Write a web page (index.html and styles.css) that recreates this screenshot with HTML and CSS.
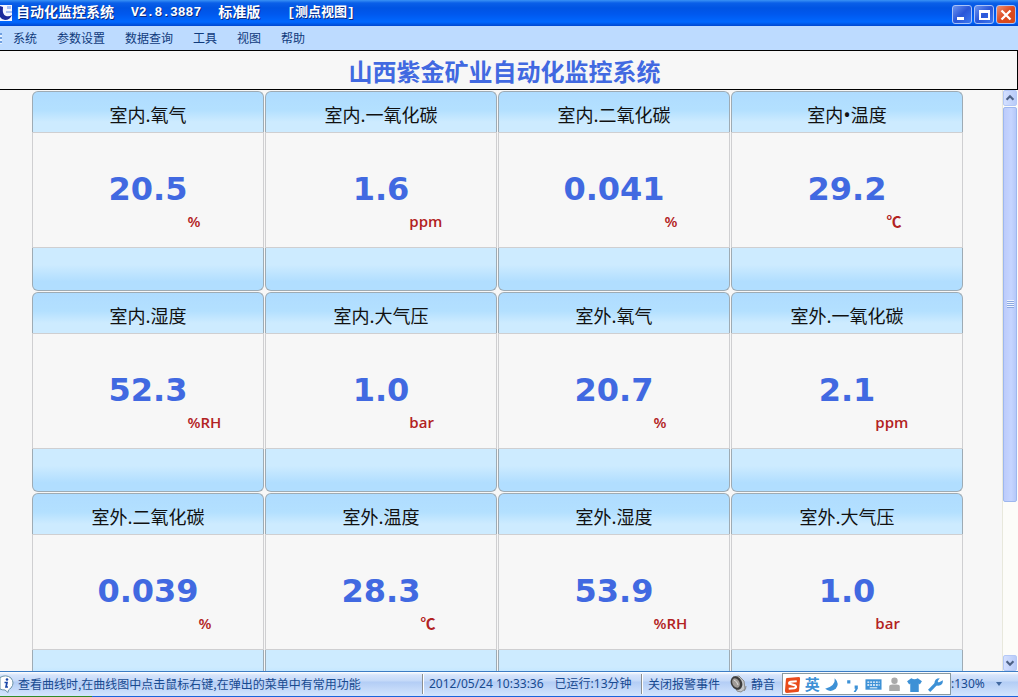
FILE: index.html
```html
<!DOCTYPE html>
<html lang="zh-CN">
<head>
<meta charset="utf-8">
<title>自动化监控系统</title>
<link rel="stylesheet" href="styles.css">
</head>
<body>
<div class="app">
  <header class="titlebar">
    <svg class="app-icon" viewBox="0 0 12 16" aria-hidden="true"><rect width="12" height="16" fill="#f4f6ff"/><path d="M0 1L3 2Q2 10 6 11Q9 12 12 10Q10 15 5 15Q2 15 0 12Z" fill="#1a2a9c"/><path d="M7 1h4v3h-4zM6 6h6v2h-6z" fill="#a9c0f2"/></svg>
    <h1 class="window-title"><span>自动化监控系统</span><span class="version">V2.8.3887</span><span>标准版</span><span class="view-name">[测点视图]</span></h1>
    <div class="window-buttons">
      <button class="win-btn" type="button" aria-label="最小化"><svg viewBox="0 0 18 18"><path d="M4 11h7v3h-7z" fill="#fff"/></svg></button>
      <button class="win-btn" type="button" aria-label="最大化"><svg viewBox="0 0 18 18"><path d="M4 4h11v10H4zM6 7v5h7V7z" fill="#fff" fill-rule="evenodd"/></svg></button>
      <button class="win-btn win-close" type="button" aria-label="关闭"><svg viewBox="0 0 18 18"><path d="M4.500 4.500l9 9M13.500 4.500l-9 9" stroke="#fff" stroke-width="2.300"/></svg></button>
    </div>
  </header>
  <nav class="menubar" aria-label="主菜单">
    <i class="menu-grip"></i>
    <button type="button">系统</button>
    <button type="button">参数设置</button>
    <button type="button">数据查询</button>
    <button type="button">工具</button>
    <button type="button">视图</button>
    <button type="button">帮助</button>
  </nav>
  <h2 class="banner">山西紫金矿业自动化监控系统</h2>
  <div class="workspace">
    <main class="cards">
      <section class="card"><h3>室内.氧气</h3><div class="reading"><span class="value">20.5</span><span class="unit">%</span></div><footer></footer></section>
      <section class="card"><h3>室内.一氧化碳</h3><div class="reading"><span class="value">1.6</span><span class="unit">ppm</span></div><footer></footer></section>
      <section class="card"><h3>室内.二氧化碳</h3><div class="reading"><span class="value">0.041</span><span class="unit">%</span></div><footer></footer></section>
      <section class="card"><h3>室内<span class="bullet">•</span>温度</h3><div class="reading"><span class="value">29.2</span><span class="unit">℃</span></div><footer></footer></section>
      <section class="card"><h3>室内.湿度</h3><div class="reading"><span class="value">52.3</span><span class="unit">%RH</span></div><footer></footer></section>
      <section class="card"><h3>室内.大气压</h3><div class="reading"><span class="value">1.0</span><span class="unit">bar</span></div><footer></footer></section>
      <section class="card"><h3>室外.氧气</h3><div class="reading"><span class="value">20.7</span><span class="unit">%</span></div><footer></footer></section>
      <section class="card"><h3>室外.一氧化碳</h3><div class="reading"><span class="value">2.1</span><span class="unit">ppm</span></div><footer></footer></section>
      <section class="card"><h3>室外.二氧化碳</h3><div class="reading"><span class="value">0.039</span><span class="unit">%</span></div><footer></footer></section>
      <section class="card"><h3>室外.温度</h3><div class="reading"><span class="value">28.3</span><span class="unit">℃</span></div><footer></footer></section>
      <section class="card"><h3>室外.湿度</h3><div class="reading"><span class="value">53.9</span><span class="unit">%RH</span></div><footer></footer></section>
      <section class="card"><h3>室外.大气压</h3><div class="reading"><span class="value">1.0</span><span class="unit">bar</span></div><footer></footer></section>
    </main>
    <div class="scrollbar">
      <button class="scroll-btn" type="button" aria-label="向上滚动"><svg viewBox="0 0 14 14"><path d="M3 9l4-4 4 4" fill="none" stroke="#4d6185" stroke-width="2.500"/></svg></button>
      <div class="scroll-track"><div class="scroll-thumb"><i class="grip"></i></div></div>
      <button class="scroll-btn" type="button" aria-label="向下滚动"><svg viewBox="0 0 14 14"><path d="M3 5l4 4 4-4" fill="none" stroke="#4d6185" stroke-width="2.500"/></svg></button>
    </div>
  </div>
  <footer class="statusbar">
    <div class="status-hint">
      <svg class="info-icon" viewBox="0 0 14 18" aria-hidden="true"><path d="M0 2.500Q6-1 11 3Q15 8 11 13Q9 14.500 8.500 15L8 17.500 5 15Q2 15 0 14Z" fill="#fff" stroke="#6d93a8"/><circle cx="7" cy="4.500" r="1.300" fill="#1b47a8"/><path d="M4.500 7.500h2.500L6 12H8" fill="none" stroke="#1b47a8" stroke-width="1.700"/></svg>
      <span>查看曲线时,在曲线图中点击鼠标右键,在弹出的菜单中有常用功能</span>
    </div>
    <div class="status-time"><span>2012/05/24 10:33:36</span><span>已运行:13分钟</span></div>
    <div class="status-alarm">
      <span>关闭报警事件</span>
      <span class="mute"><svg class="speaker" viewBox="0 0 18 18" aria-hidden="true"><path d="M4 2L10 1l5 5 1 8-4 3-4-1z" fill="#c5c8cb" stroke="#8b8b8b"/><ellipse cx="7.500" cy="8" rx="5.500" ry="7" transform="rotate(-28 7.500 8)" fill="#3d3d3d"/><ellipse cx="7" cy="8" rx="3.500" ry="5" transform="rotate(-28 7 8)" fill="#a09b97"/><path d="M5 5q3 1 4 5" fill="none" stroke="#ddd"/><path d="M17 11q0 3-2 5" fill="none" stroke="#888"/></svg>静音</span>
    </div>
    <div class="ime">
      <svg viewBox="0 0 18 18"><path d="M3 2L16 1Q17 1 17 3L16 15Q16 17 14 17L3 18Q1 18 1 16L2 4Q2 2 3 2Z" fill="#e94b1b"/><path d="M13.500 5.500L7 6Q5 6.500 5.500 8L12 10Q14 12 11 13L5 13.500" fill="none" stroke="#fff" stroke-width="2.200"/></svg>
      <span>英</span>
      <svg viewBox="0 0 16 16"><path d="M11 2Q12 9 2 12Q7 16 12 12Q16 7 11 2Z" fill="#3d91d6"/></svg>
      <svg viewBox="0 0 16 16"><path d="M3 4h3v3H3zM10 9h3v3l-2 3H9l2-3h-1z" fill="#3d91d6"/></svg>
      <svg viewBox="0 0 18 14"><rect x="0.500" y="1.500" width="17" height="11" fill="#3d91d6"/><path d="M2.500 4.500h13M2.500 7.500h13" stroke="#fff" stroke-width="1.500" stroke-dasharray="2 1"/><path d="M5 10.500h8" stroke="#fff"/></svg>
      <svg viewBox="0 0 16 16"><circle cx="8" cy="4.500" r="3" fill="#aaa"/><path d="M3 14V10q0-2 3-2h4q3 0 3 2v4z" fill="#aaa"/></svg>
      <svg viewBox="0 0 16 16"><path d="M1 5L5 2q3 2 6 0l4 3-2 3-1-1v8H4V7L3 8z" fill="#3d91d6"/></svg>
      <svg viewBox="0 0 16 16"><path d="M2 14L9 7" stroke="#3d91d6" stroke-width="3"/><path d="M7 7Q7 2 12 2L10 5l1 1 4-2Q15 10 9 9Z" fill="#3d91d6"/></svg>
    </div>
    <button class="zoom-level" type="button"><span>:130%</span><i class="caret"></i></button>
  </footer>
  <div class="taskbar-edge"></div>
</div>
</body>
</html>
```
FILE: styles.css
```css
* { box-sizing: border-box; }
body {
  margin: 0;
  font-family: "Noto Sans CJK SC", sans-serif;
  background: #f7f7f7;
}
button { margin: 0; padding: 0; border: 0; background: none; font: inherit; color: inherit; }
svg { display: block; }
h1, h2, h3 { margin: 0; }
.app { height: 100vh; display: flex; flex-direction: column; overflow: hidden; }

.titlebar {
  flex: none;
  height: 26px;
  display: flex;
  align-items: center;
  background: linear-gradient(#3a92f5 0, #0a5fe8 3px, #0054e3 8px, #0058ee 14px, #0068ff 22px, #0048d0 26px);
}
.app-icon { width: 12px; height: 16px; }
.window-title {
  flex: 1;
  display: flex;
  gap: 17px;
  padding-left: 4px;
  color: #fff;
  font-family: "Liberation Mono", "Noto Sans CJK SC", monospace;
  font-size: 14px;
  line-height: 20px;
  font-weight: 700;
  text-shadow: 1px 1px 0 #0a2a80;
  white-space: nowrap;
}
.version { font-size: 13px; }
.view-name { padding-left: 10px; font-size: 13px; }
.window-buttons { display: flex; gap: 2px; padding: 2px 2px 0 0; }
.win-btn {
  width: 20px;
  height: 19px;
  border: 1px solid #a9c3f8;
  border-radius: 3px;
  background: linear-gradient(135deg, #6c94f0, #2a56d8 50%, #3c78f0);
}
.win-close { background: linear-gradient(135deg, #f09070, #dc4a20 50%, #d84a18); }

.menubar {
  flex: none;
  height: 24px;
  display: flex;
  align-items: center;
  gap: 20px;
  background: #bddbff;
  color: #103a7c;
  font-size: 12px;
  line-height: 24px;
}
.menu-grip {
  width: 2px;
  height: 11px;
  margin-right: -9px;
  background: repeating-linear-gradient(#6f9fe0 0 2px, #e4f0ff 2px 4px);
}
.banner {
  flex: none;
  height: 40px;
  border: 1px solid #000;
  border-left: 0;
  padding-right: 8px;
  color: #4169e1;
  font-size: 24px;
  line-height: 39px;
  font-weight: 700;
  text-align: center;
}

.workspace { flex: 1; min-height: 0; display: flex; }
.cards {
  flex: 1;
  min-width: 0;
  overflow: hidden;
  display: grid;
  grid-template-columns: repeat(4, 1fr);
  grid-auto-rows: 200px;
  gap: 1px;
  padding: 1px 39px 0 32px;
}
.card {
  display: grid;
  grid-template-rows: 41px 1fr 43px;
}
.card h3 {
  border: 1px solid #9eabb4;
  border-bottom: 0;
  border-radius: 6px 6px 0 0;
  background: linear-gradient(#afdcff, #b3e0ff 45%, #cdebff 75%);
  color: #111;
  font-size: 18px;
  line-height: 44px;
  font-weight: 400;
  text-align: center;
}
.bullet { font-family: "Open Sans", sans-serif; font-size: 20px; }
.card footer {
  border: 1px solid #9eabb4;
  border-top: 0;
  border-radius: 0 0 6px 6px;
  background: linear-gradient(#cdebff 40%, #b1deff 80%);
}
.reading {
  display: grid;
  grid-template-columns: 1fr auto 1fr;
  align-content: start;
  padding-top: 35px;
  background: #f7f7f7;
  border: 1px solid #cfcfd1;
}
.value {
  grid-column: 2;
  color: #4169e1;
  font-family: "DejaVu Sans", sans-serif;
  font-size: 32px;
  line-height: 42px;
  font-weight: 700;
}
.unit {
  grid-column: 3;
  grid-row: 2;
  color: #b22222;
  font-family: "Open Sans", "Noto Sans CJK SC", sans-serif;
  font-size: 15px;
  line-height: 22px;
  font-weight: 600;
}

.scrollbar {
  width: 16px;
  display: flex;
  flex-direction: column;
  border-left: 1px solid #e8e8dc;
  background: #fcfcf9;
}
.scroll-btn {
  width: 14px;
  height: 16px;
  border: 1px solid #b4c8f6;
  border-radius: 2px;
  background: linear-gradient(90deg, #d4e0ff, #b8cbf8);
}
.scroll-track { flex: 1; padding-top: 1px; }
.scroll-thumb {
  width: 14px;
  height: 72%;
  display: grid;
  place-items: center;
  border: 1px solid #9db7ee;
  border-radius: 2px;
  background: linear-gradient(90deg, #bccbfb, #c5d5ff 60%, #b5c8f8);
}
.grip { width: 7px; height: 8px; background: repeating-linear-gradient(#eef4ff 0 1px, #8ca8e0 1px 2px); }

.statusbar {
  flex: none;
  height: 25px;
  display: flex;
  align-items: center;
  border-top: 1px solid #3c7cc4;
  background: linear-gradient(#fff 0, #d6e4fb 3px, #c4d9f8 9px, #b3cdf5 10px, #d4e5fd 24px);
  color: #184a90;
  font-size: 12px;
  line-height: 20px;
  white-space: nowrap;
}
.status-hint { flex: 1; display: flex; align-items: center; gap: 4px; }
.info-icon { width: 14px; height: 18px; }
.status-time, .status-alarm {
  display: flex;
  align-items: center;
  height: 20px;
  border-left: 1px solid #8b8f90;
  box-shadow: inset 1px 0 #fff;
}
.status-time { width: 219px; padding-left: 6px; gap: 11px; font-family: "Noto Sans", "Noto Sans CJK SC", sans-serif; }
.status-alarm { width: 141px; padding-left: 6px; gap: 9px; }
.mute { display: flex; align-items: center; gap: 4px; }
.speaker { width: 18px; height: 18px; }
.ime {
  width: 169px;
  height: 22px;
  display: flex;
  align-items: center;
  justify-content: space-between;
  padding: 0 6px 0 1px;
  border: 1px solid #8a9aa0;
  background: #fff;
  color: #3d91d6;
  font-size: 15px;
  font-weight: 700;
}
.ime svg { width: 17px; height: 17px; }
.zoom-level { width: 67px; display: flex; align-items: center; gap: 11px; font-family: "Noto Sans", sans-serif; }
.caret { border: 3px solid transparent; border-top: 4px solid #4168a0; border-bottom: 0; }
.taskbar-edge { flex: none; height: 1px; background: linear-gradient(90deg, #318a26 9%, #1c64dc 9%); }
```
